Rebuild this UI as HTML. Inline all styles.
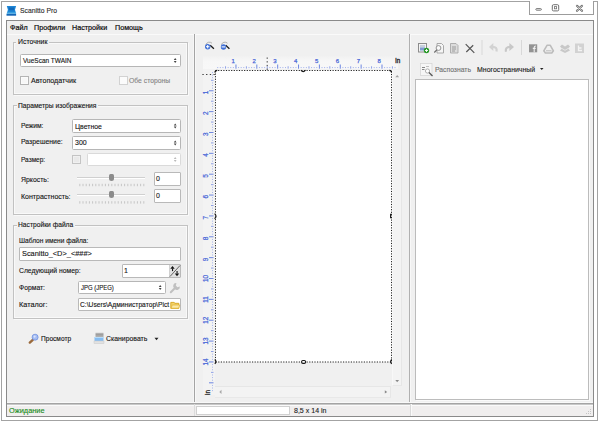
<!DOCTYPE html>
<html><head><meta charset="utf-8">
<style>
html,body{margin:0;padding:0;width:600px;height:423px;overflow:hidden;background:#fff;}
body{position:relative;font-family:"Liberation Sans",sans-serif;font-size:7px;color:#222;}
.a{position:absolute;box-sizing:border-box;}
.t{position:absolute;white-space:nowrap;line-height:10px;-webkit-text-stroke:0.12px currentColor;}
svg{position:absolute;overflow:visible;}
</style></head><body>
<div class="a" style="left:1px;top:1px;width:597px;height:420px;border:1px solid #a3a3a3;background:#fff;"></div>
<div class="a" style="left:6px;top:20px;width:588px;height:397px;border:1px solid #8a8a8a;background:#f0f0f0;"></div>
<div class="a" style="left:7px;top:34px;width:586px;height:1px;background:#fafafa;"></div>
<svg style="left:0;top:0" width="600" height="20"><path d="M6.8 6H16.1L15 9.8L16.1 13.4H6.8L7.9 9.8Z" fill="#1d86d6"/><path d="M8.5 7.6H14.4L13.8 10.3H9.1Z" fill="#0b5cae" opacity=".7"/><rect x="6.8" y="12.6" width="9.3" height="0.9" fill="#5cc6f2"/><rect x="6.5" y="13.8" width="9.6" height="1.9" fill="#1466b6"/></svg>
<div class="t" style="left:20px;top:6px;font-size:7.28px;color:#2a2a2a;transform:scaleX(0.9346);transform-origin:0 0;">Scanitto Pro</div>
<div class="a" style="left:529px;top:1px;width:65px;height:14px;border:1px solid #9c9c9c;border-top:none;background:#fff;"></div>
<svg style="left:0;top:0" width="600" height="20"><rect x="535.8" y="8.6" width="5.6" height="1.6" rx=".8" fill="none" stroke="#6a6a6a" stroke-width=".9"/><rect x="552.3" y="4.7" width="6.4" height="6.2" rx="1.2" fill="none" stroke="#707070" stroke-width="1"/><rect x="554.4" y="6.6" width="2.2" height="2.2" fill="none" stroke="#707070" stroke-width=".8"/><path d="M577 5.8L582 10.8M582 5.8L577 10.8" stroke="#6a6a6a" stroke-width="2.2" stroke-linecap="round"/><path d="M577 5.8L582 10.8M582 5.8L577 10.8" stroke="#fff" stroke-width=".7" stroke-linecap="round"/></svg>
<div class="t" style="left:10px;top:22.5px;font-size:7.70px;color:#0a0a0a;transform:scaleX(0.9346);transform-origin:0 0;-webkit-text-stroke:0.2px #0a0a0a;">Файл</div>
<div class="t" style="left:33.5px;top:22.5px;font-size:7.70px;color:#0a0a0a;transform:scaleX(0.9346);transform-origin:0 0;-webkit-text-stroke:0.2px #0a0a0a;">Профили</div>
<div class="t" style="left:72px;top:22.5px;font-size:7.70px;color:#0a0a0a;transform:scaleX(0.9346);transform-origin:0 0;-webkit-text-stroke:0.2px #0a0a0a;">Настройки</div>
<div class="t" style="left:115px;top:22.5px;font-size:7.70px;color:#0a0a0a;transform:scaleX(0.9346);transform-origin:0 0;-webkit-text-stroke:0.2px #0a0a0a;">Помощь</div>
<div class="a" style="left:194px;top:34px;width:1px;height:370px;background:#a4a4a4;"></div>
<div class="a" style="left:409px;top:34px;width:1px;height:370px;background:#b0b0b0;"></div>
<div class="a" style="left:195px;top:35px;width:1px;height:368px;background:#f8f8f8;"></div>
<div class="a" style="left:410px;top:35px;width:1px;height:368px;background:#f8f8f8;"></div>
<div class="a" style="left:193px;top:35px;width:1px;height:368px;background:#f6f6f6;"></div>
<div class="a" style="left:7px;top:402px;width:586px;height:1px;background:#f9f9f9;"></div>
<div class="a" style="left:7px;top:403px;width:586px;height:1px;background:#a4a4a4;"></div>
<div class="a" style="left:7px;top:404px;width:586px;height:12px;background:#f0eeee;"></div>
<div class="a" style="left:7px;top:404px;width:586px;height:1px;background:#c8c8c8;"></div>
<div class="a" style="left:7px;top:405px;width:586px;height:1px;background:#fafafa;"></div>
<div class="a" style="left:13px;top:42px;width:175px;height:53px;border:1px solid #c2c2c2;box-shadow:inset 0 0 0 1px #f9f9f9, 1px 1px 0 #f9f9f9;"></div>
<div class="a" style="left:16.0px;top:39px;width:32.5px;height:6px;background:#f0f0f0;"></div>
<div class="t" style="left:17.5px;top:37px;font-size:7.38px;color:#141414;transform:scaleX(0.9346);transform-origin:0 0;">Источник</div>
<div class="a" style="left:13px;top:105px;width:175px;height:110px;border:1px solid #c2c2c2;box-shadow:inset 0 0 0 1px #f9f9f9, 1px 1px 0 #f9f9f9;"></div>
<div class="a" style="left:16.5px;top:102px;width:81.5px;height:6px;background:#f0f0f0;"></div>
<div class="t" style="left:18px;top:101px;font-size:7.17px;color:#141414;transform:scaleX(0.9346);transform-origin:0 0;">Параметры изображения</div>
<div class="a" style="left:13px;top:225px;width:175px;height:94px;border:1px solid #c2c2c2;box-shadow:inset 0 0 0 1px #f9f9f9, 1px 1px 0 #f9f9f9;"></div>
<div class="a" style="left:16.5px;top:222px;width:58px;height:6px;background:#f0f0f0;"></div>
<div class="t" style="left:18px;top:220px;font-size:7.17px;color:#141414;transform:scaleX(0.9346);transform-origin:0 0;">Настройки файла</div>
<div class="a" style="left:20px;top:54px;width:161px;height:13px;border:1px solid #b6b6b6;background:#fff;border-radius:1.5px;"></div>
<svg style="left:0;top:0" width="1" height="1"><path d="M173.79999999999998 59.9L175.2 57.9L176.6 59.9ZM173.79999999999998 61.1L175.2 63.1L176.6 61.1Z" fill="#444"/></svg>
<div class="t" style="left:23px;top:56px;font-size:6.96px;color:#141414;transform:scaleX(0.9346);transform-origin:0 0;">VueScan TWAIN</div>
<div class="a" style="left:20px;top:76px;width:9px;height:9px;border:1px solid #b4b4b4;background:#f7f7f7;box-shadow:inset 0 0 0 1px #fbfbfb;"></div>
<div class="t" style="left:31px;top:75.5px;font-size:7.60px;color:#141414;transform:scaleX(0.9346);transform-origin:0 0;">Автоподатчик</div>
<div class="a" style="left:119px;top:76px;width:9px;height:9px;border:1px solid #d2d2d2;background:#fbfbfb;box-shadow:inset 0 0 0 1px #fbfbfb;"></div>
<div class="t" style="left:129px;top:75.5px;font-size:7.28px;color:#858585;transform:scaleX(0.9346);transform-origin:0 0;">Обе стороны</div>
<div class="t" style="left:20.5px;top:121px;font-size:7.17px;color:#141414;transform:scaleX(0.9346);transform-origin:0 0;">Режим:</div>
<div class="a" style="left:72px;top:119px;width:109px;height:14px;border:1px solid #b6b6b6;background:#fff;border-radius:1.5px;"></div>
<svg style="left:0;top:0" width="1" height="1"><path d="M173.79999999999998 125.4L175.2 123.4L176.6 125.4ZM173.79999999999998 126.6L175.2 128.6L176.6 126.6Z" fill="#444"/></svg>
<div class="t" style="left:75px;top:121.5px;font-size:7.38px;color:#141414;transform:scaleX(0.9346);transform-origin:0 0;">Цветное</div>
<div class="t" style="left:20.5px;top:137px;font-size:7.38px;color:#141414;transform:scaleX(0.9346);transform-origin:0 0;">Разрешение:</div>
<div class="a" style="left:72px;top:136px;width:109px;height:14px;border:1px solid #b6b6b6;background:#fff;border-radius:1.5px;"></div>
<svg style="left:0;top:0" width="1" height="1"><path d="M173.79999999999998 142.4L175.2 140.4L176.6 142.4ZM173.79999999999998 143.6L175.2 145.6L176.6 143.6Z" fill="#444"/></svg>
<div class="t" style="left:75px;top:138px;font-size:7.49px;color:#141414;transform:scaleX(0.9346);transform-origin:0 0;">300</div>
<div class="t" style="left:20.5px;top:154.5px;font-size:6.96px;color:#141414;transform:scaleX(0.9346);transform-origin:0 0;">Размер:</div>
<div class="a" style="left:72px;top:155px;width:9px;height:9px;border:1px solid #c4c4c4;background:#e9e9e9;box-shadow:inset 0 0 0 1px #f0f0f0;"></div>
<div class="a" style="left:87px;top:153px;width:94px;height:13px;border:1px solid #dadada;background:#fff;border-radius:1.5px;"></div>
<svg style="left:0;top:0" width="1" height="1"><path d="M173.79999999999998 158.9L175.2 156.9L176.6 158.9ZM173.79999999999998 160.1L175.2 162.1L176.6 160.1Z" fill="#bbb"/></svg>
<div class="t" style="left:21px;top:175px;font-size:7.38px;color:#141414;transform:scaleX(0.9346);transform-origin:0 0;">Яркость:</div>
<div class="t" style="left:20.5px;top:192px;font-size:7.49px;color:#141414;transform:scaleX(0.9346);transform-origin:0 0;">Контрастность:</div>
<div class="a" style="left:77px;top:177px;width:68px;height:2px;border-top:1px solid #d0d0d0;border-bottom:1px solid #fff;"></div>
<svg style="left:0;top:0" width="1" height="1"><rect x="79.3" y="183.8" width="1" height="2.4" fill="#c6c6c6"/><rect x="82.5" y="183.8" width="1" height="2.4" fill="#c6c6c6"/><rect x="85.7" y="183.8" width="1" height="2.4" fill="#c6c6c6"/><rect x="88.9" y="183.8" width="1" height="2.4" fill="#c6c6c6"/><rect x="92.1" y="183.8" width="1" height="2.4" fill="#c6c6c6"/><rect x="95.3" y="183.8" width="1" height="2.4" fill="#c6c6c6"/><rect x="98.5" y="183.8" width="1" height="2.4" fill="#c6c6c6"/><rect x="101.7" y="183.8" width="1" height="2.4" fill="#c6c6c6"/><rect x="104.9" y="183.8" width="1" height="2.4" fill="#c6c6c6"/><rect x="108.1" y="183.8" width="1" height="2.4" fill="#c6c6c6"/><rect x="111.3" y="183.8" width="1" height="2.4" fill="#c6c6c6"/><rect x="114.5" y="183.8" width="1" height="2.4" fill="#c6c6c6"/><rect x="117.7" y="183.8" width="1" height="2.4" fill="#c6c6c6"/><rect x="120.9" y="183.8" width="1" height="2.4" fill="#c6c6c6"/><rect x="124.1" y="183.8" width="1" height="2.4" fill="#c6c6c6"/><rect x="127.3" y="183.8" width="1" height="2.4" fill="#c6c6c6"/><rect x="130.5" y="183.8" width="1" height="2.4" fill="#c6c6c6"/><rect x="133.7" y="183.8" width="1" height="2.4" fill="#c6c6c6"/><rect x="136.9" y="183.8" width="1" height="2.4" fill="#c6c6c6"/><rect x="140.1" y="183.8" width="1" height="2.4" fill="#c6c6c6"/><rect x="143.3" y="183.8" width="1" height="2.4" fill="#c6c6c6"/></svg>
<div class="a" style="left:109px;top:173.7px;width:5px;height:7.300000000000011px;background:#8c8c8c;border-radius:1.5px 1.5px 2.5px 2.5px;"></div>
<div class="a" style="left:77px;top:194px;width:68px;height:2px;border-top:1px solid #d0d0d0;border-bottom:1px solid #fff;"></div>
<svg style="left:0;top:0" width="1" height="1"><rect x="79.3" y="201.2" width="1" height="2.4" fill="#c6c6c6"/><rect x="82.5" y="201.2" width="1" height="2.4" fill="#c6c6c6"/><rect x="85.7" y="201.2" width="1" height="2.4" fill="#c6c6c6"/><rect x="88.9" y="201.2" width="1" height="2.4" fill="#c6c6c6"/><rect x="92.1" y="201.2" width="1" height="2.4" fill="#c6c6c6"/><rect x="95.3" y="201.2" width="1" height="2.4" fill="#c6c6c6"/><rect x="98.5" y="201.2" width="1" height="2.4" fill="#c6c6c6"/><rect x="101.7" y="201.2" width="1" height="2.4" fill="#c6c6c6"/><rect x="104.9" y="201.2" width="1" height="2.4" fill="#c6c6c6"/><rect x="108.1" y="201.2" width="1" height="2.4" fill="#c6c6c6"/><rect x="111.3" y="201.2" width="1" height="2.4" fill="#c6c6c6"/><rect x="114.5" y="201.2" width="1" height="2.4" fill="#c6c6c6"/><rect x="117.7" y="201.2" width="1" height="2.4" fill="#c6c6c6"/><rect x="120.9" y="201.2" width="1" height="2.4" fill="#c6c6c6"/><rect x="124.1" y="201.2" width="1" height="2.4" fill="#c6c6c6"/><rect x="127.3" y="201.2" width="1" height="2.4" fill="#c6c6c6"/><rect x="130.5" y="201.2" width="1" height="2.4" fill="#c6c6c6"/><rect x="133.7" y="201.2" width="1" height="2.4" fill="#c6c6c6"/><rect x="136.9" y="201.2" width="1" height="2.4" fill="#c6c6c6"/><rect x="140.1" y="201.2" width="1" height="2.4" fill="#c6c6c6"/><rect x="143.3" y="201.2" width="1" height="2.4" fill="#c6c6c6"/></svg>
<div class="a" style="left:109px;top:190.7px;width:5px;height:7.300000000000011px;background:#8c8c8c;border-radius:1.5px 1.5px 2.5px 2.5px;"></div>
<div class="a" style="left:154px;top:172px;width:27px;height:14px;border:1px solid #b9b9b9;background:#fff;border-radius:1px;"></div>
<div class="t" style="left:155.5px;top:174px;font-size:7.49px;color:#141414;transform:scaleX(0.9346);transform-origin:0 0;">0</div>
<div class="a" style="left:154px;top:189px;width:27px;height:14px;border:1px solid #b9b9b9;background:#fff;border-radius:1px;"></div>
<div class="t" style="left:155.5px;top:190.5px;font-size:7.49px;color:#141414;transform:scaleX(0.9346);transform-origin:0 0;">0</div>
<div class="t" style="left:19px;top:236px;font-size:7.06px;color:#141414;transform:scaleX(0.9346);transform-origin:0 0;">Шаблон имени файла:</div>
<div class="a" style="left:19px;top:247px;width:162px;height:14px;border:1px solid #b9b9b9;background:#fff;border-radius:1px;"></div>
<div class="t" style="left:21.5px;top:249px;font-size:7.92px;color:#141414;transform:scaleX(0.9346);transform-origin:0 0;">Scanitto_&lt;D&gt;_&lt;###&gt;</div>
<div class="t" style="left:19px;top:265.5px;font-size:7.28px;color:#141414;transform:scaleX(0.9346);transform-origin:0 0;">Следующий номер:</div>
<div class="a" style="left:122px;top:264px;width:59px;height:14px;border:1px solid #b9b9b9;background:#fff;border-radius:1px;"></div>
<div class="t" style="left:124px;top:266px;font-size:7.49px;color:#141414;transform:scaleX(0.9346);transform-origin:0 0;">1</div>
<div class="a" style="left:169px;top:265px;width:11px;height:12px;background:#e2e2e2;border-left:1px solid #d0d0d0;"></div>
<svg style="left:0;top:0" width="1" height="1"><path d="M170 276.5L180 265.5" stroke="#444" stroke-width=".8"/><path d="M172.5 266L170.3 268.8H174.7Z" fill="#111"/><rect x="172" y="268.5" width="1.1" height="2.6" fill="#111"/><path d="M177 276.2L174.8 273.4H179.2Z" fill="#111"/><rect x="176.5" y="271" width="1.1" height="2.6" fill="#111"/></svg>
<div class="t" style="left:19px;top:283px;font-size:7.28px;color:#141414;transform:scaleX(0.9346);transform-origin:0 0;">Формат:</div>
<div class="a" style="left:78px;top:281px;width:88px;height:13px;border:1px solid #b6b6b6;background:#fff;border-radius:1.5px;"></div>
<svg style="left:0;top:0" width="1" height="1"><path d="M158.79999999999998 286.9L160.2 284.9L161.6 286.9ZM158.79999999999998 288.1L160.2 290.1L161.6 288.1Z" fill="#444"/></svg>
<div class="t" style="left:80.5px;top:283px;font-size:7.60px;color:#141414;transform:scaleX(0.7850);transform-origin:0 0;">JPG (JPEG)</div>
<svg style="left:0;top:0" width="1" height="1"><path d="M170.8 292.2L175.5 287.5" stroke="#c0c0c0" stroke-width="2" stroke-linecap="round"/><path d="M174.6 288.4A2.8 2.8 0 0 1 176.5 283.2L175.8 285.6L177.4 287.2L179.8 286.5A2.8 2.8 0 0 1 174.6 288.4Z" fill="#c0c0c0"/></svg>
<div class="t" style="left:19px;top:300px;font-size:7.81px;color:#141414;transform:scaleX(0.9346);transform-origin:0 0;">Каталог:</div>
<div class="a" style="left:78px;top:298px;width:103px;height:13px;border:1px solid #b9b9b9;background:#fff;border-radius:1px;"></div>
<div class="t" style="left:79.5px;top:300px;font-size:7.17px;color:#141414;transform:scaleX(0.9346);transform-origin:0 0;">C:\Users\Администратор\Pict</div>
<svg style="left:0;top:0" width="1" height="1"><path d="M170.8 302.4H174L175 303.3H178.8V308.4H170.8Z" fill="#f3d36a" stroke="#d6a41c" stroke-width=".9"/><path d="M172.2 305H179.8L178.6 308.2H171.2Z" fill="#fbe9a8" stroke="#e0b030" stroke-width=".7"/></svg>
<svg style="left:0;top:0" width="1" height="1"><path d="M29.8 342.6L32.8 339.8" stroke="#9a6a3c" stroke-width="2.4" stroke-linecap="round"/><circle cx="35.1" cy="337.2" r="3" fill="#a6bdf2" stroke="#6f8fe0" stroke-width=".8"/><circle cx="34.6" cy="336.6" r="1.1" fill="#d8e4fc"/></svg>
<div class="t" style="left:41px;top:334px;font-size:7.06px;color:#141414;transform:scaleX(0.9346);transform-origin:0 0;">Просмотр</div>
<svg style="left:0;top:0" width="1" height="1"><defs><linearGradient id="lid" x1="0" y1="0" x2="0" y2="1"><stop offset="0" stop-color="#d8d8d8"/><stop offset=".35" stop-color="#9a9a9a"/><stop offset="1" stop-color="#b4b4b4"/></linearGradient></defs><rect x="95.5" y="332.5" width="8" height="4.5" fill="url(#lid)"/><rect x="94.5" y="337" width="9" height="4" fill="#86bdf2"/><rect x="94.5" y="337" width="9" height="1" fill="#b9dcf8"/><rect x="94" y="341" width="10" height="2.3" fill="#e2e2e2" stroke="#c6c6c6" stroke-width=".5"/></svg>
<div class="t" style="left:105.5px;top:334px;font-size:7.38px;color:#141414;transform:scaleX(0.9346);transform-origin:0 0;">Сканировать</div>
<svg style="left:0;top:0" width="1" height="1"><path d="M154.5 337.8H158.5L156.5 340.3Z" fill="#222"/></svg>
<svg style="left:0;top:0" width="1" height="1"><path d="M205.8 44.8A3.8 3.8 0 0 1 212 43.2" fill="none" stroke="#a8a8a8" stroke-width=".9"/><path d="M210.2 45.2L213.9 48.7" stroke="#1a1a1a" stroke-width="1.3"/><circle cx="207.7" cy="46.7" r="2.7" fill="#3f6fd6"/><path d="M206 46.7H209.4M207.7 45V48.4" stroke="#fff" stroke-width="1"/><path d="M221.3 44.8A3.8 3.8 0 0 1 227.5 43.2" fill="none" stroke="#a8a8a8" stroke-width=".9"/><path d="M225.7 45.2L229.4 48.7" stroke="#1a1a1a" stroke-width="1.3"/><circle cx="223.5" cy="47" r="2.7" fill="#3f6fd6"/><path d="M221.6 46.9H225.4" stroke="#fff" stroke-width="1.1"/></svg>
<div class="a" style="left:203px;top:56px;width:195px;height:13px;background:linear-gradient(#f1f1f1,#f7f7f7 40%,#f8f8f8);"></div>
<div class="a" style="left:203px;top:69px;width:12px;height:326px;background:#f3f3f3;"></div>
<svg style="left:0;top:0" width="1" height="1"><rect x="217.21" y="67" width="1" height="1.1" fill="#a8b6ec"/><rect x="219.81" y="67" width="1" height="1.1" fill="#a8b6ec"/><rect x="222.42" y="67" width="1" height="1.1" fill="#a8b6ec"/><rect x="225.03" y="66.3" width="1" height="2.3" fill="#8ea0e6"/><rect x="227.64" y="67" width="1" height="1.1" fill="#a8b6ec"/><rect x="230.25" y="67" width="1" height="1.1" fill="#a8b6ec"/><rect x="232.85" y="67" width="1" height="1.1" fill="#a8b6ec"/><rect x="235.46" y="64.5" width="1" height="4.2" fill="#6d86e0"/><rect x="238.07" y="67" width="1" height="1.1" fill="#a8b6ec"/><rect x="240.67" y="67" width="1" height="1.1" fill="#a8b6ec"/><rect x="243.28" y="67" width="1" height="1.1" fill="#a8b6ec"/><rect x="245.89" y="66.3" width="1" height="2.3" fill="#8ea0e6"/><rect x="248.50" y="67" width="1" height="1.1" fill="#a8b6ec"/><rect x="251.10" y="67" width="1" height="1.1" fill="#a8b6ec"/><rect x="253.71" y="67" width="1" height="1.1" fill="#a8b6ec"/><rect x="256.32" y="64.5" width="1" height="4.2" fill="#6d86e0"/><rect x="258.93" y="67" width="1" height="1.1" fill="#a8b6ec"/><rect x="261.53" y="67" width="1" height="1.1" fill="#a8b6ec"/><rect x="264.14" y="67" width="1" height="1.1" fill="#a8b6ec"/><rect x="266.75" y="66.3" width="1" height="2.3" fill="#8ea0e6"/><rect x="269.36" y="67" width="1" height="1.1" fill="#a8b6ec"/><rect x="271.96" y="67" width="1" height="1.1" fill="#a8b6ec"/><rect x="274.57" y="67" width="1" height="1.1" fill="#a8b6ec"/><rect x="277.18" y="64.5" width="1" height="4.2" fill="#6d86e0"/><rect x="279.79" y="67" width="1" height="1.1" fill="#a8b6ec"/><rect x="282.39" y="67" width="1" height="1.1" fill="#a8b6ec"/><rect x="285.00" y="67" width="1" height="1.1" fill="#a8b6ec"/><rect x="287.61" y="66.3" width="1" height="2.3" fill="#8ea0e6"/><rect x="290.22" y="67" width="1" height="1.1" fill="#a8b6ec"/><rect x="292.82" y="67" width="1" height="1.1" fill="#a8b6ec"/><rect x="295.43" y="67" width="1" height="1.1" fill="#a8b6ec"/><rect x="298.04" y="64.5" width="1" height="4.2" fill="#6d86e0"/><rect x="300.65" y="67" width="1" height="1.1" fill="#a8b6ec"/><rect x="303.25" y="67" width="1" height="1.1" fill="#a8b6ec"/><rect x="305.86" y="67" width="1" height="1.1" fill="#a8b6ec"/><rect x="308.47" y="66.3" width="1" height="2.3" fill="#8ea0e6"/><rect x="311.08" y="67" width="1" height="1.1" fill="#a8b6ec"/><rect x="313.69" y="67" width="1" height="1.1" fill="#a8b6ec"/><rect x="316.29" y="67" width="1" height="1.1" fill="#a8b6ec"/><rect x="318.90" y="64.5" width="1" height="4.2" fill="#6d86e0"/><rect x="321.51" y="67" width="1" height="1.1" fill="#a8b6ec"/><rect x="324.12" y="67" width="1" height="1.1" fill="#a8b6ec"/><rect x="326.72" y="67" width="1" height="1.1" fill="#a8b6ec"/><rect x="329.33" y="66.3" width="1" height="2.3" fill="#8ea0e6"/><rect x="331.94" y="67" width="1" height="1.1" fill="#a8b6ec"/><rect x="334.54" y="67" width="1" height="1.1" fill="#a8b6ec"/><rect x="337.15" y="67" width="1" height="1.1" fill="#a8b6ec"/><rect x="339.76" y="64.5" width="1" height="4.2" fill="#6d86e0"/><rect x="342.37" y="67" width="1" height="1.1" fill="#a8b6ec"/><rect x="344.98" y="67" width="1" height="1.1" fill="#a8b6ec"/><rect x="347.58" y="67" width="1" height="1.1" fill="#a8b6ec"/><rect x="350.19" y="66.3" width="1" height="2.3" fill="#8ea0e6"/><rect x="352.80" y="67" width="1" height="1.1" fill="#a8b6ec"/><rect x="355.40" y="67" width="1" height="1.1" fill="#a8b6ec"/><rect x="358.01" y="67" width="1" height="1.1" fill="#a8b6ec"/><rect x="360.62" y="64.5" width="1" height="4.2" fill="#6d86e0"/><rect x="363.23" y="67" width="1" height="1.1" fill="#a8b6ec"/><rect x="365.83" y="67" width="1" height="1.1" fill="#a8b6ec"/><rect x="368.44" y="67" width="1" height="1.1" fill="#a8b6ec"/><rect x="371.05" y="66.3" width="1" height="2.3" fill="#8ea0e6"/><rect x="373.66" y="67" width="1" height="1.1" fill="#a8b6ec"/><rect x="376.26" y="67" width="1" height="1.1" fill="#a8b6ec"/><rect x="378.87" y="67" width="1" height="1.1" fill="#a8b6ec"/><rect x="381.48" y="64.5" width="1" height="4.2" fill="#6d86e0"/><rect x="384.09" y="67" width="1" height="1.1" fill="#a8b6ec"/><rect x="386.69" y="67" width="1" height="1.1" fill="#a8b6ec"/><rect x="389.30" y="67" width="1" height="1.1" fill="#a8b6ec"/><rect x="391.91" y="66.3" width="1" height="2.3" fill="#8ea0e6"/><rect x="394.52" y="67" width="1" height="1.1" fill="#a8b6ec"/><text x="234.86" y="63.2" font-size="6" text-anchor="end" fill="#4a68d8" stroke="#4a68d8" stroke-width="0.25" font-family="Liberation Sans">1</text><text x="255.72" y="63.2" font-size="6" text-anchor="end" fill="#4a68d8" stroke="#4a68d8" stroke-width="0.25" font-family="Liberation Sans">2</text><text x="276.58" y="63.2" font-size="6" text-anchor="end" fill="#4a68d8" stroke="#4a68d8" stroke-width="0.25" font-family="Liberation Sans">3</text><text x="297.44" y="63.2" font-size="6" text-anchor="end" fill="#4a68d8" stroke="#4a68d8" stroke-width="0.25" font-family="Liberation Sans">4</text><text x="318.30" y="63.2" font-size="6" text-anchor="end" fill="#4a68d8" stroke="#4a68d8" stroke-width="0.25" font-family="Liberation Sans">5</text><text x="339.16" y="63.2" font-size="6" text-anchor="end" fill="#4a68d8" stroke="#4a68d8" stroke-width="0.25" font-family="Liberation Sans">6</text><text x="360.02" y="63.2" font-size="6" text-anchor="end" fill="#4a68d8" stroke="#4a68d8" stroke-width="0.25" font-family="Liberation Sans">7</text><text x="380.88" y="63.2" font-size="6" text-anchor="end" fill="#4a68d8" stroke="#4a68d8" stroke-width="0.25" font-family="Liberation Sans">8</text><text x="395.3" y="63.3" font-size="6.3" fill="#222" stroke="#222" stroke-width=".3" font-family="Liberation Sans">in</text><rect x="212" y="72.01" width="1" height="1" fill="#a8b6ec"/><rect x="212" y="74.62" width="1" height="1" fill="#a8b6ec"/><rect x="212" y="77.22" width="1" height="1" fill="#a8b6ec"/><rect x="211" y="79.83" width="2.5" height="1" fill="#8ea0e6"/><rect x="212" y="82.44" width="1" height="1" fill="#a8b6ec"/><rect x="212" y="85.05" width="1" height="1" fill="#a8b6ec"/><rect x="212" y="87.65" width="1" height="1" fill="#a8b6ec"/><rect x="209" y="90.26" width="4.5" height="1" fill="#6d86e0"/><rect x="212" y="92.87" width="1" height="1" fill="#a8b6ec"/><rect x="212" y="95.48" width="1" height="1" fill="#a8b6ec"/><rect x="212" y="98.08" width="1" height="1" fill="#a8b6ec"/><rect x="211" y="100.69" width="2.5" height="1" fill="#8ea0e6"/><rect x="212" y="103.30" width="1" height="1" fill="#a8b6ec"/><rect x="212" y="105.91" width="1" height="1" fill="#a8b6ec"/><rect x="212" y="108.51" width="1" height="1" fill="#a8b6ec"/><rect x="209" y="111.12" width="4.5" height="1" fill="#6d86e0"/><rect x="212" y="113.73" width="1" height="1" fill="#a8b6ec"/><rect x="212" y="116.34" width="1" height="1" fill="#a8b6ec"/><rect x="212" y="118.94" width="1" height="1" fill="#a8b6ec"/><rect x="211" y="121.55" width="2.5" height="1" fill="#8ea0e6"/><rect x="212" y="124.16" width="1" height="1" fill="#a8b6ec"/><rect x="212" y="126.77" width="1" height="1" fill="#a8b6ec"/><rect x="212" y="129.37" width="1" height="1" fill="#a8b6ec"/><rect x="209" y="131.98" width="4.5" height="1" fill="#6d86e0"/><rect x="212" y="134.59" width="1" height="1" fill="#a8b6ec"/><rect x="212" y="137.19" width="1" height="1" fill="#a8b6ec"/><rect x="212" y="139.80" width="1" height="1" fill="#a8b6ec"/><rect x="211" y="142.41" width="2.5" height="1" fill="#8ea0e6"/><rect x="212" y="145.02" width="1" height="1" fill="#a8b6ec"/><rect x="212" y="147.62" width="1" height="1" fill="#a8b6ec"/><rect x="212" y="150.23" width="1" height="1" fill="#a8b6ec"/><rect x="209" y="152.84" width="4.5" height="1" fill="#6d86e0"/><rect x="212" y="155.45" width="1" height="1" fill="#a8b6ec"/><rect x="212" y="158.06" width="1" height="1" fill="#a8b6ec"/><rect x="212" y="160.66" width="1" height="1" fill="#a8b6ec"/><rect x="211" y="163.27" width="2.5" height="1" fill="#8ea0e6"/><rect x="212" y="165.88" width="1" height="1" fill="#a8b6ec"/><rect x="212" y="168.49" width="1" height="1" fill="#a8b6ec"/><rect x="212" y="171.09" width="1" height="1" fill="#a8b6ec"/><rect x="209" y="173.70" width="4.5" height="1" fill="#6d86e0"/><rect x="212" y="176.31" width="1" height="1" fill="#a8b6ec"/><rect x="212" y="178.92" width="1" height="1" fill="#a8b6ec"/><rect x="212" y="181.52" width="1" height="1" fill="#a8b6ec"/><rect x="211" y="184.13" width="2.5" height="1" fill="#8ea0e6"/><rect x="212" y="186.74" width="1" height="1" fill="#a8b6ec"/><rect x="212" y="189.34" width="1" height="1" fill="#a8b6ec"/><rect x="212" y="191.95" width="1" height="1" fill="#a8b6ec"/><rect x="209" y="194.56" width="4.5" height="1" fill="#6d86e0"/><rect x="212" y="197.17" width="1" height="1" fill="#a8b6ec"/><rect x="212" y="199.78" width="1" height="1" fill="#a8b6ec"/><rect x="212" y="202.38" width="1" height="1" fill="#a8b6ec"/><rect x="211" y="204.99" width="2.5" height="1" fill="#8ea0e6"/><rect x="212" y="207.60" width="1" height="1" fill="#a8b6ec"/><rect x="212" y="210.21" width="1" height="1" fill="#a8b6ec"/><rect x="212" y="212.81" width="1" height="1" fill="#a8b6ec"/><rect x="209" y="215.42" width="4.5" height="1" fill="#6d86e0"/><rect x="212" y="218.03" width="1" height="1" fill="#a8b6ec"/><rect x="212" y="220.63" width="1" height="1" fill="#a8b6ec"/><rect x="212" y="223.24" width="1" height="1" fill="#a8b6ec"/><rect x="211" y="225.85" width="2.5" height="1" fill="#8ea0e6"/><rect x="212" y="228.46" width="1" height="1" fill="#a8b6ec"/><rect x="212" y="231.06" width="1" height="1" fill="#a8b6ec"/><rect x="212" y="233.67" width="1" height="1" fill="#a8b6ec"/><rect x="209" y="236.28" width="4.5" height="1" fill="#6d86e0"/><rect x="212" y="238.89" width="1" height="1" fill="#a8b6ec"/><rect x="212" y="241.50" width="1" height="1" fill="#a8b6ec"/><rect x="212" y="244.10" width="1" height="1" fill="#a8b6ec"/><rect x="211" y="246.71" width="2.5" height="1" fill="#8ea0e6"/><rect x="212" y="249.32" width="1" height="1" fill="#a8b6ec"/><rect x="212" y="251.93" width="1" height="1" fill="#a8b6ec"/><rect x="212" y="254.53" width="1" height="1" fill="#a8b6ec"/><rect x="209" y="257.14" width="4.5" height="1" fill="#6d86e0"/><rect x="212" y="259.75" width="1" height="1" fill="#a8b6ec"/><rect x="212" y="262.36" width="1" height="1" fill="#a8b6ec"/><rect x="212" y="264.96" width="1" height="1" fill="#a8b6ec"/><rect x="211" y="267.57" width="2.5" height="1" fill="#8ea0e6"/><rect x="212" y="270.18" width="1" height="1" fill="#a8b6ec"/><rect x="212" y="272.78" width="1" height="1" fill="#a8b6ec"/><rect x="212" y="275.39" width="1" height="1" fill="#a8b6ec"/><rect x="209" y="278.00" width="4.5" height="1" fill="#6d86e0"/><rect x="212" y="280.61" width="1" height="1" fill="#a8b6ec"/><rect x="212" y="283.22" width="1" height="1" fill="#a8b6ec"/><rect x="212" y="285.82" width="1" height="1" fill="#a8b6ec"/><rect x="211" y="288.43" width="2.5" height="1" fill="#8ea0e6"/><rect x="212" y="291.04" width="1" height="1" fill="#a8b6ec"/><rect x="212" y="293.64" width="1" height="1" fill="#a8b6ec"/><rect x="212" y="296.25" width="1" height="1" fill="#a8b6ec"/><rect x="209" y="298.86" width="4.5" height="1" fill="#6d86e0"/><rect x="212" y="301.47" width="1" height="1" fill="#a8b6ec"/><rect x="212" y="304.07" width="1" height="1" fill="#a8b6ec"/><rect x="212" y="306.68" width="1" height="1" fill="#a8b6ec"/><rect x="211" y="309.29" width="2.5" height="1" fill="#8ea0e6"/><rect x="212" y="311.90" width="1" height="1" fill="#a8b6ec"/><rect x="212" y="314.50" width="1" height="1" fill="#a8b6ec"/><rect x="212" y="317.11" width="1" height="1" fill="#a8b6ec"/><rect x="209" y="319.72" width="4.5" height="1" fill="#6d86e0"/><rect x="212" y="322.33" width="1" height="1" fill="#a8b6ec"/><rect x="212" y="324.94" width="1" height="1" fill="#a8b6ec"/><rect x="212" y="327.54" width="1" height="1" fill="#a8b6ec"/><rect x="211" y="330.15" width="2.5" height="1" fill="#8ea0e6"/><rect x="212" y="332.76" width="1" height="1" fill="#a8b6ec"/><rect x="212" y="335.37" width="1" height="1" fill="#a8b6ec"/><rect x="212" y="337.97" width="1" height="1" fill="#a8b6ec"/><rect x="209" y="340.58" width="4.5" height="1" fill="#6d86e0"/><rect x="212" y="343.19" width="1" height="1" fill="#a8b6ec"/><rect x="212" y="345.79" width="1" height="1" fill="#a8b6ec"/><rect x="212" y="348.40" width="1" height="1" fill="#a8b6ec"/><rect x="211" y="351.01" width="2.5" height="1" fill="#8ea0e6"/><rect x="212" y="353.62" width="1" height="1" fill="#a8b6ec"/><rect x="212" y="356.23" width="1" height="1" fill="#a8b6ec"/><rect x="212" y="358.83" width="1" height="1" fill="#a8b6ec"/><rect x="209" y="361.44" width="4.5" height="1" fill="#6d86e0"/><rect x="212" y="364.05" width="1" height="1" fill="#a8b6ec"/><rect x="212" y="366.65" width="1" height="1" fill="#a8b6ec"/><rect x="212" y="369.26" width="1" height="1" fill="#a8b6ec"/><rect x="211" y="371.87" width="2.5" height="1" fill="#8ea0e6"/><rect x="212" y="374.48" width="1" height="1" fill="#a8b6ec"/><rect x="212" y="377.09" width="1" height="1" fill="#a8b6ec"/><rect x="212" y="379.69" width="1" height="1" fill="#a8b6ec"/><rect x="209" y="382.30" width="4.5" height="1" fill="#6d86e0"/><rect x="212" y="384.91" width="1" height="1" fill="#a8b6ec"/><rect x="212" y="387.51" width="1" height="1" fill="#a8b6ec"/><rect x="212" y="390.12" width="1" height="1" fill="#a8b6ec"/><text transform="translate(208.3 94.26) rotate(-90)" font-size="6.4" text-anchor="start" fill="#4a68d8" stroke="#4a68d8" stroke-width="0.25" font-family="Liberation Sans">1</text><text transform="translate(208.3 115.12) rotate(-90)" font-size="6.4" text-anchor="start" fill="#4a68d8" stroke="#4a68d8" stroke-width="0.25" font-family="Liberation Sans">2</text><text transform="translate(208.3 135.98) rotate(-90)" font-size="6.4" text-anchor="start" fill="#4a68d8" stroke="#4a68d8" stroke-width="0.25" font-family="Liberation Sans">3</text><text transform="translate(208.3 156.84) rotate(-90)" font-size="6.4" text-anchor="start" fill="#4a68d8" stroke="#4a68d8" stroke-width="0.25" font-family="Liberation Sans">4</text><text transform="translate(208.3 177.70) rotate(-90)" font-size="6.4" text-anchor="start" fill="#4a68d8" stroke="#4a68d8" stroke-width="0.25" font-family="Liberation Sans">5</text><text transform="translate(208.3 198.56) rotate(-90)" font-size="6.4" text-anchor="start" fill="#4a68d8" stroke="#4a68d8" stroke-width="0.25" font-family="Liberation Sans">6</text><text transform="translate(208.3 219.42) rotate(-90)" font-size="6.4" text-anchor="start" fill="#4a68d8" stroke="#4a68d8" stroke-width="0.25" font-family="Liberation Sans">7</text><text transform="translate(208.3 240.28) rotate(-90)" font-size="6.4" text-anchor="start" fill="#4a68d8" stroke="#4a68d8" stroke-width="0.25" font-family="Liberation Sans">8</text><text transform="translate(208.3 261.14) rotate(-90)" font-size="6.4" text-anchor="start" fill="#4a68d8" stroke="#4a68d8" stroke-width="0.25" font-family="Liberation Sans">9</text><text transform="translate(208.3 282.00) rotate(-90)" font-size="6.4" text-anchor="start" fill="#4a68d8" stroke="#4a68d8" stroke-width="0.25" font-family="Liberation Sans">10</text><text transform="translate(208.3 302.86) rotate(-90)" font-size="6.4" text-anchor="start" fill="#4a68d8" stroke="#4a68d8" stroke-width="0.25" font-family="Liberation Sans">11</text><text transform="translate(208.3 323.72) rotate(-90)" font-size="6.4" text-anchor="start" fill="#4a68d8" stroke="#4a68d8" stroke-width="0.25" font-family="Liberation Sans">12</text><text transform="translate(208.3 344.58) rotate(-90)" font-size="6.4" text-anchor="start" fill="#4a68d8" stroke="#4a68d8" stroke-width="0.25" font-family="Liberation Sans">13</text><text transform="translate(208.3 365.44) rotate(-90)" font-size="6.4" text-anchor="start" fill="#4a68d8" stroke="#4a68d8" stroke-width="0.25" font-family="Liberation Sans">14</text><text transform="translate(209.8 395) rotate(-90)" font-size="6.3" fill="#222" stroke="#222" stroke-width=".3" font-family="Liberation Sans">in</text><path d="M267.2 57.5V70" stroke="#333" stroke-width="1" stroke-dasharray="1.3 2.4"/><path d="M202.4 74.5H215" stroke="#333" stroke-width="1" stroke-dasharray="1.3 2.4"/></svg>
<div class="a" style="left:215px;top:70px;width:177px;height:292px;background:#fff;"></div>
<svg style="left:0;top:0" width="1" height="1"><path d="M215.5 70.5H391.5V362H215.5Z" fill="none" stroke="#222" stroke-width="1" stroke-dasharray="1.2 1.4"/><path d="M217.3 70.4Q215 70.4 215 72.6" fill="none" stroke="#1a1a1a" stroke-width="1.4"/><path d="M389.3 70.4Q391.6 70.4 391.6 72.6" fill="none" stroke="#1a1a1a" stroke-width="1.4"/><path d="M214.8 359.5Q217 361.6 214.8 363.8" fill="none" stroke="#1a1a1a" stroke-width="1.3"/><path d="M391.8 359.5Q389.6 361.6 391.8 363.8" fill="none" stroke="#1a1a1a" stroke-width="1.3"/><rect x="301.6" y="360.5" width="4" height="2.9" rx="1.3" fill="#fff" stroke="#1a1a1a" stroke-width="1.1"/><path d="M300.9 70.2Q303.2 73 305.5 70.2" fill="none" stroke="#1a1a1a" stroke-width="1.2"/><path d="M214.6 213.6Q217.4 216.2 214.6 218.7" fill="none" stroke="#1a1a1a" stroke-width="1.2"/><path d="M392.4 214.3H390.6V217.6H392.4" fill="none" stroke="#1a1a1a" stroke-width="1.1"/></svg>
<div class="a" style="left:392px;top:70px;width:10px;height:316px;background:#f3f3f3;border-left:1px solid #f8f8f8;border-right:1px solid #e6e6e6;border-bottom:1px solid #e8e8e8;"></div>
<div class="a" style="left:215px;top:386px;width:176px;height:12px;background:#f3f3f3;border-top:1px solid #e6e6e6;border-bottom:1px solid #e8e8e8;border-right:1px solid #e6e6e6;"></div>
<svg style="left:0;top:0" width="1" height="1"><path d="M395.3 77.2L397.2 75L399.1 77.2Z" fill="#a0a0a0"/><path d="M395.3 380L397.2 382.2L399.1 380Z" fill="#8a8a8a"/><path d="M221.5 389.8L219.3 391.9L221.5 394Z" fill="#a8a8a8"/><path d="M384.8 390.2L387.2 391.9L384.8 393.6Z" fill="#8a8a8a"/></svg>
<div class="a" style="left:415px;top:79px;width:174px;height:321px;border:1px solid #bcbcbc;background:#fff;box-shadow:1px 1px 0 #fafafa;"></div>
<svg style="left:0;top:0" width="1" height="1"><rect x="418.5" y="43.5" width="8" height="8.5" fill="#f4f4f4" stroke="#8c8c8c" stroke-width="1"/><rect x="420" y="45" width="5" height="2.5" fill="#c8d0dc"/><rect x="420" y="47.5" width="5" height="3" fill="#7f9bd0"/><circle cx="426.5" cy="50.5" r="2.7" fill="#2a9a2a"/><path d="M425 50.5H428M426.5 49V52" stroke="#fff" stroke-width=".9"/><path d="M437 43.5H441.5L443.5 45.5V53H437Z" fill="#f6f6f6" stroke="#a0a0a0" stroke-width=".9"/><circle cx="438.5" cy="48" r="2.4" fill="#fafafa" stroke="#8a8a8a" stroke-width=".9"/><path d="M436.8 49.8L434.3 52.5" stroke="#6a6a6a" stroke-width="1.2"/><path d="M450.5 43.5H456L458 45.5V53H450.5Z" fill="#dcdcdc" stroke="#a8a8a8" stroke-width=".9"/><path d="M452 47H456M452 49H456M452 51H455" stroke="#8a8a8a" stroke-width=".8"/><path d="M465.7 44.2L474.3 52.8M473.2 45.3L466.3 52" stroke="#555" stroke-width="1.2"/><rect x="481.5" y="40" width="1" height="15" fill="#d8d8d8"/><rect x="521" y="40" width="1" height="15" fill="#d8d8d8"/><path d="M496.5 51.5Q497.5 47 492.5 46.8" fill="none" stroke="#d2d2d2" stroke-width="2.2"/><path d="M493.3 43L489 47L493.3 51Z" fill="#d2d2d2"/><path d="M506 51.8Q505 47 510 46.8" fill="none" stroke="#c8c8c8" stroke-width="2.2"/><path d="M509.4 43L514 47L509.4 51Z" fill="#c8c8c8"/><rect x="529" y="44.3" width="8.2" height="8" fill="#939393"/><path d="M534.2 52.3V47.6Q534.2 46 535.9 46M532.8 48.4H535.7" fill="none" stroke="#f0f0f0" stroke-width="1.1"/><path d="M547 45.3H550.3L553.4 50.8L551.8 53H545.4L543.8 50.8Z" fill="none" stroke="#bcbcbc" stroke-width="1.6" stroke-linejoin="round"/><path d="M546 50.8H551.5" stroke="#bcbcbc" stroke-width="1"/><path d="M562 44.5L565 46.5L568 44.5L570 46.5L568 48.5L570 50.5L565 53L560 50.5L562 48.5L560 46.5Z" fill="#c8c8c8"/><path d="M562 48.5L565 50.3L568 48.5" stroke="#eee" stroke-width=".8" fill="none"/><rect x="575" y="43.5" width="9" height="9.5" fill="#d2d2d2"/><path d="M578.5 45.5V50.5H582M578.5 48H581.5" stroke="#f4f4f4" stroke-width="1.3" fill="none"/><rect x="420.5" y="63.5" width="11.5" height="12" fill="#f6f6f6" stroke="#d6d6d6" stroke-width=".8"/><path d="M422 67.5H425M422 69.5H424.5" stroke="#7a7a7a" stroke-width=".9"/><path d="M426 66.5H429" stroke="#b0b0b0" stroke-width=".8"/><circle cx="427.5" cy="71" r="2.1" fill="#fff" stroke="#a0a0a0" stroke-width=".8"/><path d="M429 72.5L432.5 76" stroke="#555" stroke-width="1.3"/><path d="M540 68H543.5L541.75 70Z" fill="#222"/></svg>
<div class="t" style="left:8.7px;top:406px;font-size:7.92px;color:#168a16;transform:scaleX(0.9346);transform-origin:0 0;">Ожидание</div>
<div class="a" style="left:196px;top:406px;width:94px;height:9px;border:1px solid #d0d0d0;background:#fff;"></div>
<div class="a" style="left:194px;top:404px;width:1px;height:12px;background:#dcdcdc;"></div>
<div class="a" style="left:410px;top:404px;width:1px;height:12px;background:#dadada;"></div>
<div class="a" style="left:411px;top:404px;width:1px;height:12px;background:#fafafa;"></div>
<div class="t" style="left:293.5px;top:406px;font-size:7.54px;color:#222;transform:scaleX(0.9346);transform-origin:0 0;">8,5 x 14 in</div>
<svg style="left:0;top:0" width="1" height="1"><rect x="590" y="409" width="1" height="1" fill="#c4c4c4"/><rect x="588" y="411" width="1" height="1" fill="#c4c4c4"/><rect x="590" y="411" width="1" height="1" fill="#c4c4c4"/><rect x="586" y="413" width="1" height="1" fill="#c4c4c4"/><rect x="588" y="413" width="1" height="1" fill="#c4c4c4"/><rect x="590" y="413" width="1" height="1" fill="#c4c4c4"/></svg>
<div class="t" style="left:435px;top:65px;font-size:7.28px;color:#707070;transform:scaleX(0.9346);transform-origin:0 0;">Распознать</div>
<div class="t" style="left:477px;top:65px;font-size:7.44px;color:#222;transform:scaleX(0.9346);transform-origin:0 0;">Многостраничный</div>
</body></html>
